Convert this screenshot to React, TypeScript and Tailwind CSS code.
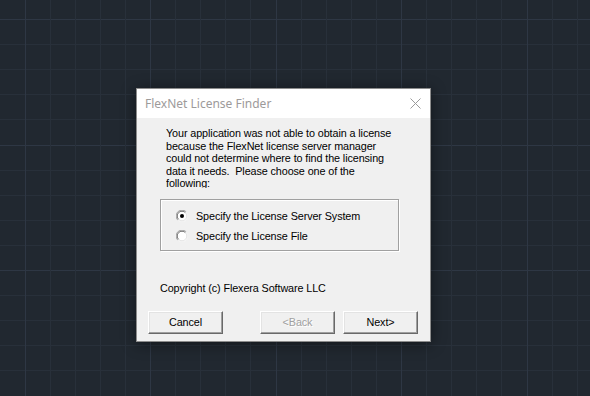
import React from "react";

function Grid() {
  const w = 590;
  const h = 396;
  const step = 25.1;
  const vx: { p: number; major: boolean }[] = [];
  for (let k = -1; k < 25; k++) {
    const p = Math.round(24.5 + step * k);
    if (p >= 0 && p < w) vx.push({ p, major: ((k % 5) + 5) % 5 === 0 });
  }
  const hy: { p: number; major: boolean }[] = [];
  for (let k = -1; k < 17; k++) {
    const p = Math.round(19 + step * k);
    if (p >= 0 && p < h) hy.push({ p, major: ((k % 5) + 5) % 5 === 0 });
  }
  return (
    <svg width={w} height={h} className="block" shapeRendering="crispEdges">
      <rect x={0} y={0} width={w} height={h} fill="#212830" />
      {hy.map((l) => (
        <rect key={"h" + l.p} x={0} y={l.p} width={w} height={1} fill={l.major ? "#2e3744" : "#28303a"} />
      ))}
      {vx.map((l) => (
        <rect key={"v" + l.p} x={l.p} y={0} width={1} height={h} fill={l.major ? "#2e3744" : "#28303a"} />
      ))}
    </svg>
  );
}

function Radio({ checked }: { checked: boolean }) {
  return (
    <svg width="12" height="12" viewBox="0 0 12 12" className="shrink-0">
      <circle cx="6" cy="6" r="5.5" fill="#ffffff" />
      <path d="M1.8 10.2 A5.5 5.5 0 0 1 10.2 1.8" fill="none" stroke="#a0a0a0" strokeWidth="1" />
      <path d="M2.6 9.4 A4.5 4.5 0 0 1 9.4 2.6" fill="none" stroke="#6a6a6a" strokeWidth="1" />
      <path d="M10.2 1.8 A5.5 5.5 0 0 1 1.8 10.2" fill="none" stroke="#f4f4f4" strokeWidth="1" />
      <path d="M9.4 2.6 A4.5 4.5 0 0 1 2.6 9.4" fill="none" stroke="#e3e3e3" strokeWidth="1" />
      {checked && <circle cx="6" cy="6" r="2" fill="#000000" />}
    </svg>
  );
}

function Btn({ label, disabled }: { label: string; disabled?: boolean }) {
  return (
    <div className="w-[75px] h-[23px] flex items-center justify-center bg-[#f0f0f0] border-t border-l border-t-white border-l-white border-r border-b border-r-[#696969] border-b-[#696969] shadow-[inset_-1px_-1px_0_#a0a0a0,inset_1px_1px_0_#e3e3e3]">
      <span className={disabled ? "text-[#a0a0a0] [text-shadow:1px_1px_0_#ffffff]" : "text-black"}>{label}</span>
    </div>
  );
}

export default function App() {
  return (
    <div className="relative w-[590px] h-[396px] overflow-hidden bg-[#212830]">
      <Grid />
      <div
        className="absolute left-[136px] top-[88px] w-[295px] h-[254px] border border-[#8c8c8c] bg-[#f0f0f0] flex flex-col shadow-[0_2px_14px_rgba(0,0,0,0.45)] text-[10.8px] tracking-[-0.1px] text-black"
        style={{ fontFamily: '"Liberation Sans", Arial, sans-serif' }}
      >
        <div className="h-[29px] bg-white flex items-center justify-between pl-[8px] pr-[9px] shrink-0 tracking-normal">
          <span className="text-[12px] text-[#9d9a9a] pt-[1px]" style={{ fontFamily: '"Noto Sans", "Open Sans", sans-serif' }}>
            FlexNet License Finder
          </span>
          <svg width="11" height="11" viewBox="0 0 11 11">
            <path d="M0.5 0.5 L10.5 10.5 M10.5 0.5 L0.5 10.5" stroke="#9a9a9a" strokeWidth="1" fill="none" />
          </svg>
        </div>
        <div className="flex flex-col flex-1 pt-[9px]">
          <div className="ml-[29px] w-[240px] h-[61px] overflow-hidden leading-[12.6px]">
            <div>Your application was not able to obtain a license</div>
            <div>because the FlexNet license server manager</div>
            <div>could not determine where to find the licensing</div>
            <div>data it needs.&nbsp; Please choose one of the</div>
            <div>following:</div>
          </div>
          <div className="ml-[23px] mt-[11px] w-[239px] h-[52px] border border-[#a0a0a0] shadow-[inset_1px_1px_0_#ffffff,1px_1px_0_#ffffff] flex flex-col pl-[15px] pt-[10px] gap-[8px]">
            <div className="flex items-center gap-[8px] h-[12px]">
              <Radio checked />
              <span>Specify the License Server System</span>
            </div>
            <div className="flex items-center gap-[8px] h-[12px]">
              <Radio checked={false} />
              <span>Specify the License File</span>
            </div>
          </div>
          <div className="ml-[23px] mt-[31px] h-[13px] leading-[13px]">Copyright (c) Flexera Software LLC</div>
          <div className="flex mt-[16px] pl-[11px]">
            <Btn label="Cancel" />
            <div className="ml-[37px]">
              <Btn label="<Back" disabled />
            </div>
            <div className="ml-[8px]">
              <Btn label="Next>" />
            </div>
          </div>
        </div>
      </div>
    </div>
  );
}
